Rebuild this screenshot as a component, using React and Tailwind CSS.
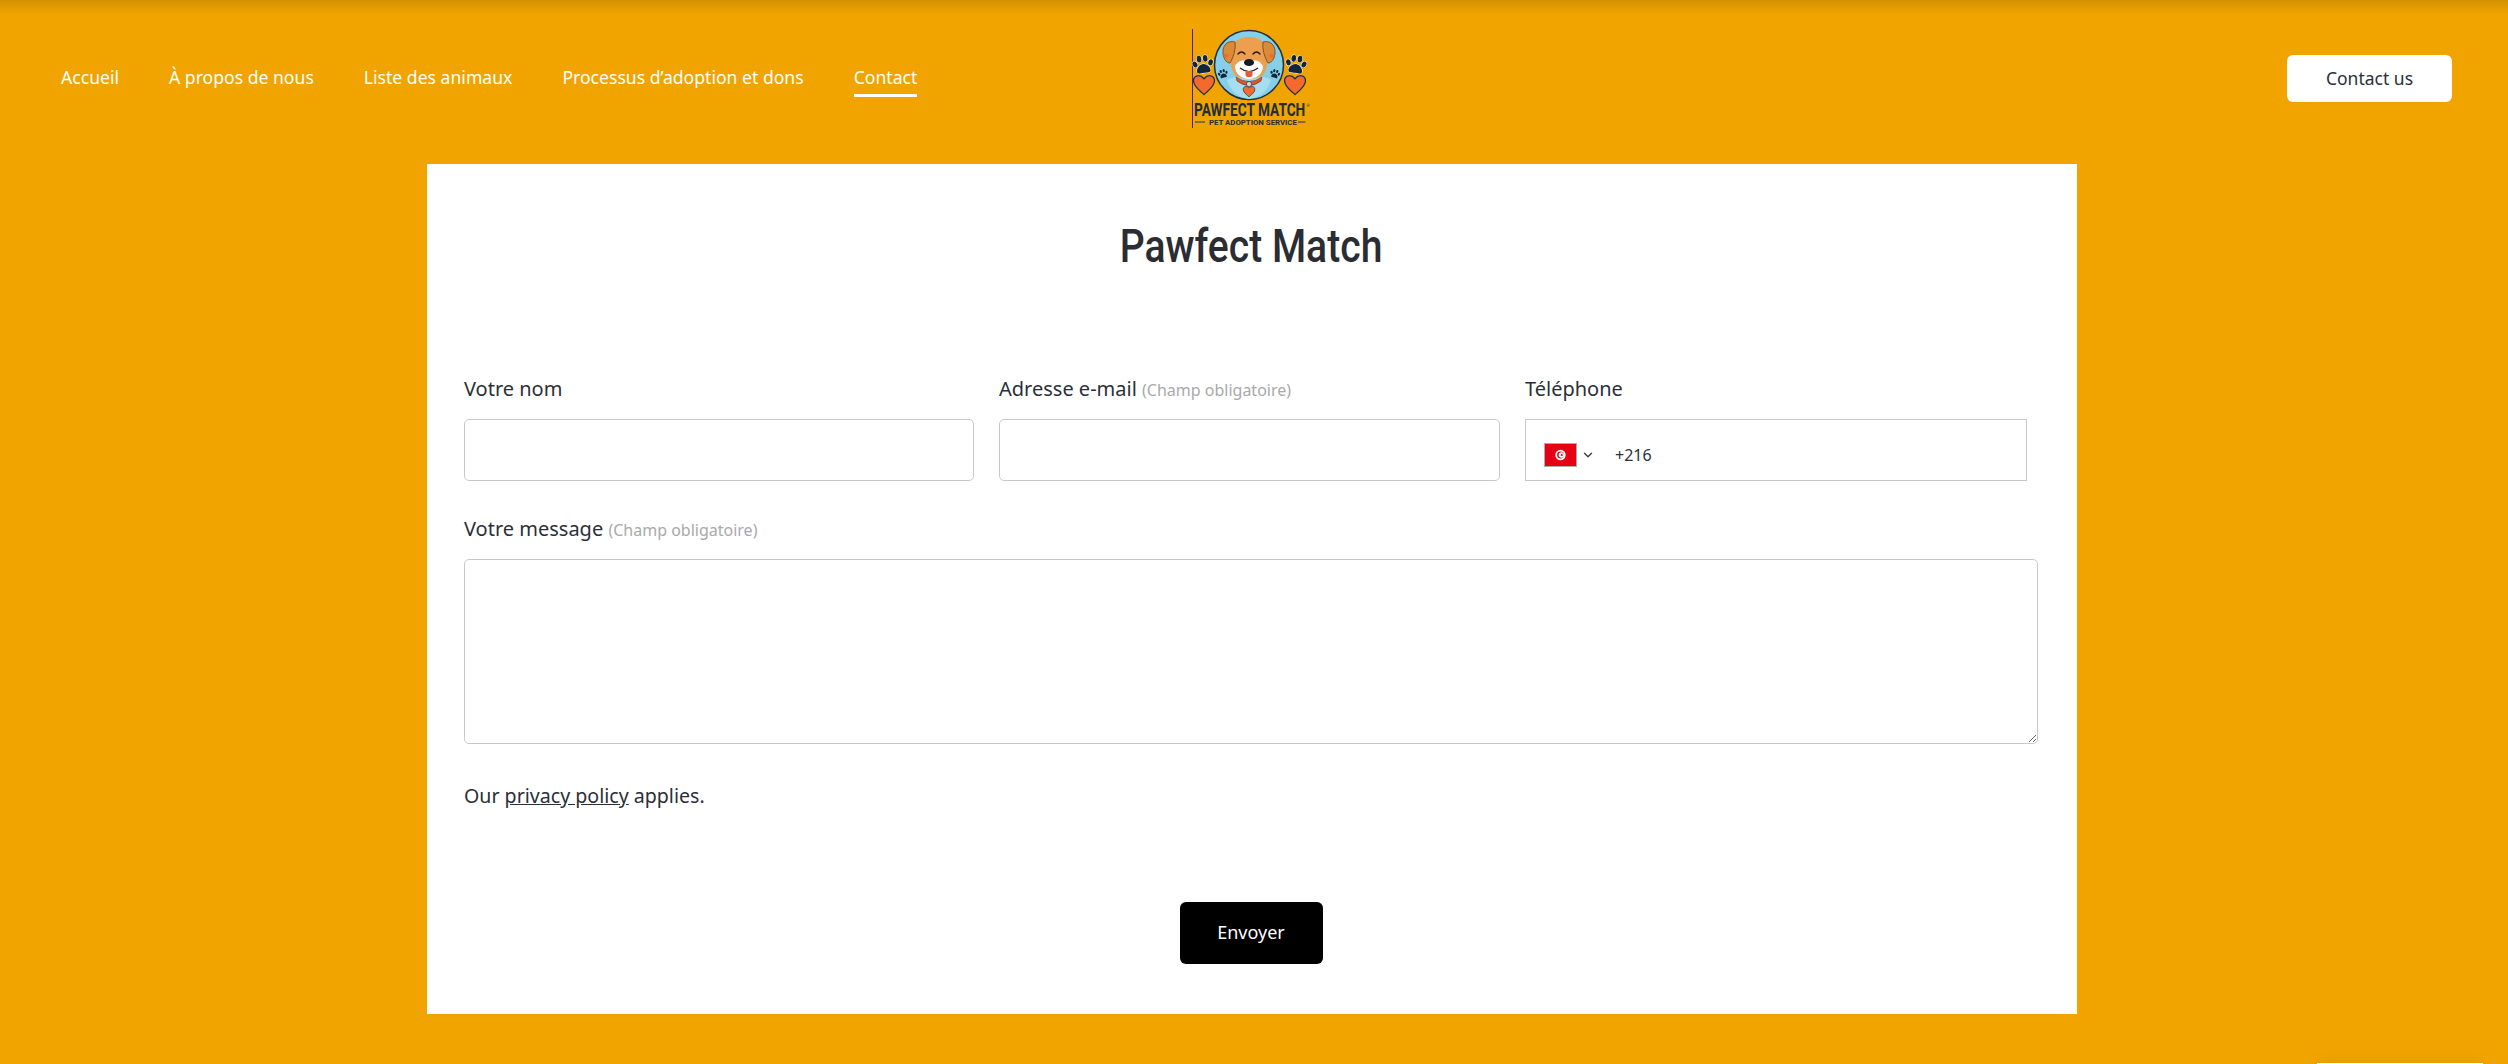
import React from "react";
import { ChevronDown } from "lucide-react";

const nav = ["Accueil", "À propos de nous", "Liste des animaux", "Processus d’adoption et dons", "Contact"];

function Paw({ x, y, r = 0, s = 1, stroke = "#fff" }) {
  return (
    <g transform={`translate(${x} ${y}) rotate(${r}) scale(${s})`} fill="#14263a" stroke={stroke} strokeWidth="0.9" paintOrder="stroke">
      <path d="M0 -1C3.5 -1 7 3 6.5 6C6 8.5 3 7.5 0 7.5C-3 7.5 -6 8.5 -6.5 6C-7 3 -3.5 -1 0 -1Z" />
      <ellipse cx="-7.5" cy="-1.5" rx="2.2" ry="3" transform="rotate(-20 -7.5 -1.5)" />
      <ellipse cx="-3" cy="-6" rx="2.2" ry="3.2" />
      <ellipse cx="3" cy="-6" rx="2.2" ry="3.2" />
      <ellipse cx="7.5" cy="-1.5" rx="2.2" ry="3" transform="rotate(20 7.5 -1.5)" />
    </g>
  );
}

function Heart({ x, y, s = 1, fill = "#f4692c", stroke = "#20303c" }) {
  return (
    <path
      transform={`translate(${x} ${y}) scale(${s})`}
      d="M0 10C-3 7-10 3-10-3C-10-8-4-10 0-5C4-10 10-8 10-3C10 3 3 7 0 10Z"
      fill={fill}
      stroke={stroke}
      strokeWidth="1.2"
    />
  );
}

function Logo() {
  return (
    <svg width="120" height="100" viewBox="0 0 120 100" className="block">
      <rect x="0" y="1" width="1" height="99" fill="#4a1fa8" />
      <circle cx="57" cy="37" r="34.5" fill="#86cfe9" stroke="#1c3444" strokeWidth="1.5" />
      <path d="M35 52C44 46 70 46 79 52C76 62 68 70 57 71C46 70 38 62 35 52Z" fill="#a6def0" />
      <path d="M40 18C44 11 50 9 57 9C64 9 70 11 74 18C78 27 76 40 71 47C66 52 48 52 43 47C38 40 36 27 40 18Z" fill="#ec9f4f" />
      <path d="M43 14C36 12 30 17 31 26C32 32 35 35 38 35C41 30 44 22 43 14Z" fill="#dc8a36" stroke="#5d3816" strokeWidth="0.7" />
      <path d="M71 14C78 12 84 17 83 26C82 32 79 35 76 35C73 30 70 22 71 14Z" fill="#dc8a36" stroke="#5d3816" strokeWidth="0.7" />
      <path d="M43 38C47 31 53 32 57 34C61 32 67 31 71 38C71 46 64 51 57 51C50 51 43 46 43 38Z" fill="#fff" />
      <path d="M46 26Q49.5 22 53 26M61 26Q64.5 22 68 26" fill="none" stroke="#2a1c10" strokeWidth="1.4" strokeLinecap="round" />
      <ellipse cx="57" cy="34.5" rx="5" ry="3.6" fill="#121c26" />
      <path d="M48 40Q57 47 66 40" fill="none" stroke="#2a1c10" strokeWidth="1.2" />
      <path d="M53.5 43H60.5V47C60.5 50 53.5 50 53.5 47Z" fill="#e8583c" />
      <path d="M44 49Q57 58 70 49L69 53Q57 62 45 53Z" fill="#e0552a" stroke="#3b2414" strokeWidth="0.5" />
      <circle cx="57" cy="56" r="2.6" fill="#cfd8dc" stroke="#24323c" strokeWidth="0.7" />
      <Heart x={57} y={63} s={0.58} />
      <Heart x={34} y={28} s={0.24} fill="#ef6a38" stroke="#ef6a38" />
      <Heart x={80} y={28} s={0.24} fill="#ef6a38" stroke="#ef6a38" />
      <Paw x={31} y={46} r={-15} s={0.5} stroke="none" />
      <Paw x={83} y={46} r={15} s={0.5} stroke="none" />
      <Paw x={11} y={37} r={-8} s={1.05} />
      <Paw x={104} y={37} r={8} s={1.05} />
      <Heart x={12} y={56} s={1.05} />
      <Heart x={103} y={56} s={1.05} />
      <text transform="translate(2 88) scale(0.76 1)" fontFamily="Roboto, sans-serif" fontWeight="700" fontSize="18" fill="#1f2f3a">PAWFECT MATCH</text>
      <text x="114.5" y="79" fontFamily="Roboto, sans-serif" fontSize="4" fill="#1f2f3a">®</text>
      <rect x="3" y="93.5" width="10" height="1" fill="#1f2f3a" />
      <rect x="106" y="93.5" width="7.5" height="1" fill="#1f2f3a" />
      <text transform="translate(17 97) scale(1.03 1)" fontFamily="Roboto, sans-serif" fontWeight="700" fontSize="7.6" fill="#1f2f3a">PET ADOPTION SERVICE</text>
    </svg>
  );
}

function Flag() {
  return (
    <svg width="33" height="24" viewBox="0 0 33 24" className="block">
      <rect width="33" height="24" fill="#a9abad" />
      <rect x="1" y="1" width="31" height="22" fill="#e70013" />
      <circle cx="16.5" cy="12" r="5.2" fill="#fff" />
      <circle cx="16.5" cy="12" r="3.4" fill="#e70013" />
      <circle cx="17.4" cy="12" r="2.7" fill="#fff" />
      <circle cx="17.8" cy="12" r="1.1" fill="#e70013" />
    </svg>
  );
}

const fieldLabel = "block h-[30px] text-[20px] leading-[30px] text-[#2b2f38]";
const hint = "text-[16px] text-[#a9a9a9]";
const box = "block w-full h-[62px] bg-white border border-[#c9c9c9] rounded-[5px] outline-none";

export default function App() {
  return (
    <div className="relative h-[1064px] overflow-hidden bg-[#f1a400] font-['Noto_Sans',sans-serif]">
      <header className="relative h-[164px] pt-[28px] grid grid-cols-[1fr_auto_1fr] bg-gradient-to-b from-[#d49200] via-[#f1a400] via-[9%] to-[#f1a400]">
        <nav className="h-[100px] pl-[61px] flex items-center gap-[50px]">
          {nav.map((n) => (
            <a
              key={n}
              className={
                "relative block -mt-[2px] text-[17.6px] leading-[30px] text-white whitespace-nowrap " +
                (n === "Contact" ? "after:absolute after:left-0 after:right-0 after:top-[32px] after:h-[3px] after:bg-white" : "")
              }
            >
              {n}
            </a>
          ))}
        </nav>
        <div className="h-[100px] pr-[4px]">
          <Logo />
        </div>
        <div className="h-[100px] pr-[56px] flex items-center justify-end">
          <a className="flex items-center justify-center w-[165px] h-[47px] mt-[1px] bg-white rounded-[6px] text-[17.5px] text-[#2b2f38]">Contact us</a>
        </div>
      </header>

      <main className="ml-[427px] w-[1650px] h-[850px] bg-white px-[37px] pt-[52px]">
        <div className="w-[1574px]">
          <h1 className="h-[60px] text-center text-[46px] leading-[60px] font-medium text-[#2b2d33] font-['Roboto',sans-serif] scale-x-[0.85]">Pawfect Match</h1>
          <form>
            <div className="mt-[98px] flex gap-[25px]">
              <div className="w-[510px]">
                <label className={fieldLabel}>Votre nom</label>
                <input className={box + " mt-[15px]"} />
              </div>
              <div className="w-[501px]">
                <label className={fieldLabel}>
                  Adresse e-mail <span className={hint}>(Champ obligatoire)</span>
                </label>
                <input className={box + " mt-[15px]"} />
              </div>
              <div className="w-[502px]">
                <label className={fieldLabel}>Téléphone</label>
                <div className="mt-[15px] h-[62px] border border-[#c9c9c9] flex items-center pt-[10px] pl-[18px]">
                  <Flag />
                  <ChevronDown className="ml-[4px] w-[14px] h-[14px] text-[#444]" strokeWidth={2.5} />
                  <span className="ml-[20px] text-[16px] text-[#2b2f38]">+216</span>
                </div>
              </div>
            </div>
            <div className="mt-[33px]">
              <label className={fieldLabel}>
                Votre message <span className={hint}>(Champ obligatoire)</span>
              </label>
              <textarea className="block mt-[15px] w-full h-[185px] bg-white border border-[#c9c9c9] rounded-[5px] outline-none resize-y" />
            </div>
            <p className="mt-[37px] text-[19.6px] leading-[30px] text-[#2b2f38]">
              Our <a className="underline">privacy policy</a> applies.
            </p>
            <div className="mt-[91px] flex justify-center">
              <button type="button" className="w-[143px] h-[62px] pb-[2px] bg-black rounded-[6px] text-white text-[18px]">Envoyer</button>
            </div>
          </form>
        </div>
      </main>

      <div className="absolute right-[25px] top-[1063px] w-[166px] h-[60px] bg-white shadow-[0_0_14px_rgba(0,0,0,0.08)]" />
    </div>
  );
}
